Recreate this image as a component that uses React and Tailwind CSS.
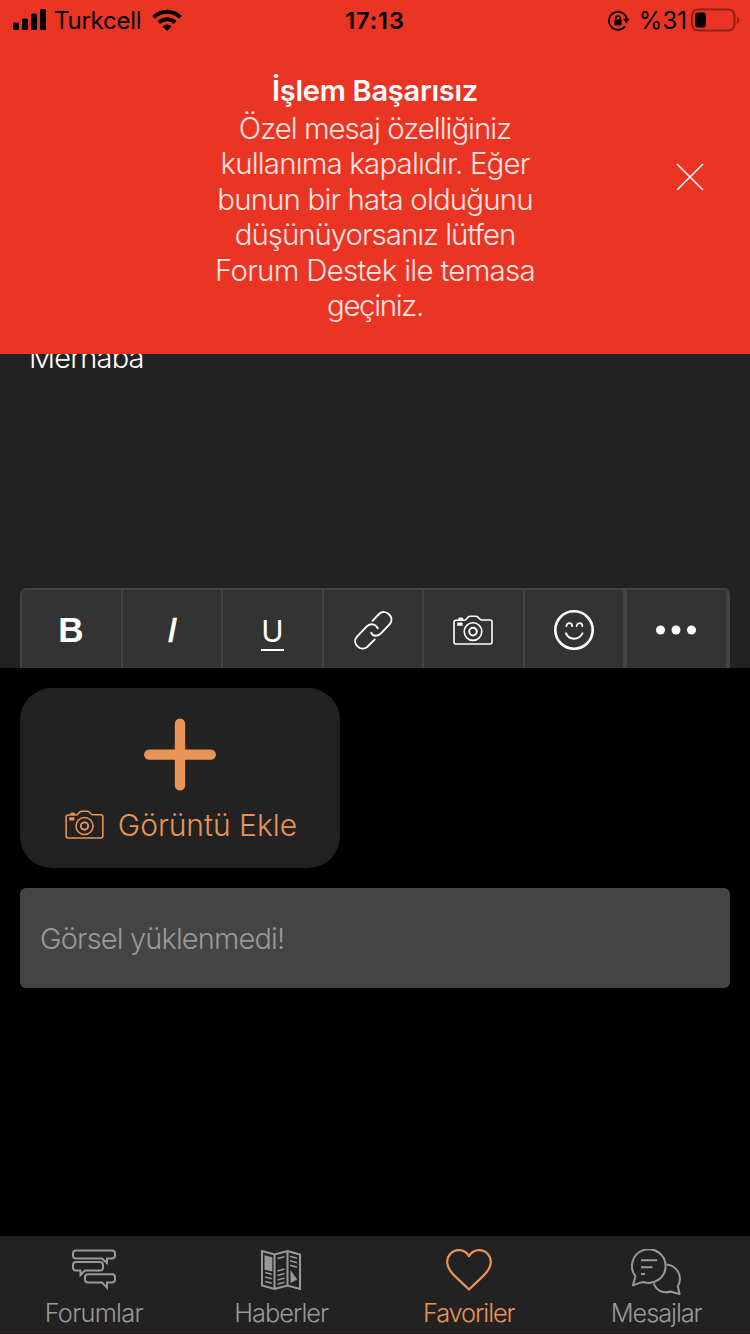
const line = "block whitespace-nowrap";

function Signal() {
  return (
    <svg className="h-[22px] w-[34px]" viewBox="0 0 34 22" fill="black">
      <rect x="0" y="13.5" width="6" height="7.5" rx="1.5" />
      <rect x="9" y="9.5" width="6" height="11.5" rx="1.5" />
      <rect x="18" y="4.5" width="6" height="16.5" rx="1.5" />
      <rect x="27" y="0" width="6" height="21" rx="1.5" />
    </svg>
  );
}

function Wifi() {
  return (
    <svg className="h-[22px] w-[30px]" viewBox="0 0 30 22" fill="none" stroke="black" strokeWidth="4">
      <path d="M1.6 8.3a19 19 0 0 1 26.8 0" />
      <path d="M6.8 13.6a11.6 11.6 0 0 1 16.4 0" />
      <path d="M15 22l-4.6-4.6a6.4 6.4 0 0 1 9.2 0z" fill="black" stroke="none" />
    </svg>
  );
}

function RotationLock() {
  return (
    <svg className="h-[22px] w-[22px]" viewBox="0 0 22 22" fill="none" stroke="black" strokeWidth="1.8">
      <path d="M17 16.4a9 9 0 1 1 1.8-7.4" />
      <path d="M15 8.7h6.6l-3.2 4.8z" fill="black" stroke="none" />
      <rect x="6.4" y="9.4" width="7.2" height="6" rx="0.8" fill="black" stroke="none" />
      <path d="M7.8 9.8V8.2a2.2 2.2 0 0 1 4.4 0v1.6" strokeWidth="1.5" />
    </svg>
  );
}

function Battery() {
  return (
    <svg className="h-[24px] w-[50px]" viewBox="0 0 50 24">
      <rect x="1" y="1.5" width="42.5" height="21" rx="6" fill="none" stroke="#8f2018" strokeWidth="2" />
      <rect x="4" y="4.5" width="11" height="15" rx="3" fill="black" />
      <path d="M46 8.5q2.6 1.4 2.6 3.8t-2.6 3.8z" fill="#8f2018" />
    </svg>
  );
}

function Camera({ className = "h-[30px] w-[40px]" }) {
  return (
    <svg className={className} viewBox="0 0 40 30" fill="none" stroke="currentColor" strokeWidth="1.6">
      <path d="M3 5.2H11.5C14 5.2 14 1.2 17 1.2H23C26 1.2 26 5 28.5 5H37Q39 5 39 7V27Q39 29 37 29H3Q1 29 1 27V7Q1 5.2 3 5.2Z" />
      <path d="M5 4.8Q5 2.6 7 2.6H8.5Q10.5 2.6 10.5 4.8Z" fill="currentColor" stroke="none" />
      <rect x="4.2" y="7.6" width="5.4" height="3.2" rx="0.5" fill="currentColor" stroke="none" />
      <circle cx="20" cy="16.6" r="8.8" />
      <circle cx="20" cy="16.6" r="3.8" strokeWidth="2" />
    </svg>
  );
}

function LinkIcon() {
  return (
    <svg className="h-[40px] w-[40px]" viewBox="0 0 40 40" fill="none" stroke="white" strokeWidth="1.9" strokeLinecap="round">
      <path d="M19.5 10.8L26.3 3.8C32.4 -1.8 42.4 7.2 36.9 13.8L28.5 22.8C25 26.8 20 26.8 18.2 22.8" />
      <path d="M21.8 29.4L14.2 37C8 42.2 -1.8 33.4 3.8 26.8L14 16.2C17.5 13 22.5 13.8 24.8 18.2" />
    </svg>
  );
}

function Smile() {
  return (
    <svg className="h-[40px] w-[40px]" viewBox="0 0 40 40" fill="none" stroke="white" strokeWidth="2" strokeLinecap="round">
      <circle cx="20" cy="20" r="18.7" strokeWidth="2.6" />
      <path d="M12.4 16.2a2.9 3 0 0 1 5.8 0M22.6 16.2a2.9 3 0 0 1 5.8 0" strokeWidth="1.7" />
      <path d="M12 23.4c3 7 13 7 16.4 0" />
    </svg>
  );
}

function Forums() {
  return (
    <svg className="h-[42px] w-[46px]" viewBox="0 0 46 42" fill="none" stroke="currentColor" strokeWidth="2">
      <path d="M5 1.5H41Q44 1.5 44 4.5V6.5Q44 9.5 41 9.5H36V14L31 9.5H5Q2 9.5 2 6.5V4.5Q2 1.5 5 1.5Z" />
      <path d="M5 13H29Q32 13 32 16V18.5Q32 21.5 29 21.5H14L9.5 26V21.5H5Q2 21.5 2 18.5V16Q2 13 5 13Z" />
      <path d="M17 25.3H41Q44 25.3 44 28.3V30.5Q44 33.5 41 33.5H36V38.6L31 33.5H17Q14 33.5 14 30.5V28.3Q14 25.3 17 25.3Z" />
    </svg>
  );
}

function News() {
  return (
    <svg className="h-[42px] w-[42px]" viewBox="0 0 42 42" fill="none" stroke="currentColor" strokeWidth="2">
      <path d="M2 2L14.5 5.5L27.5 2L40 5.5V40L27.5 36.5L14.5 40L2 36.5ZM14.5 5.5V40M27.5 2V36.5" />
      <path d="M4.5 6.3L12.3 8.2V22.5L4.5 20.8Z" fill="currentColor" stroke="none" />
      <path d="M5.2 23.5l6.6 1.8M5.2 28l6.6 1.8M5.2 32.5l6.6 1.8M17.5 9.5l7-1.8M17.5 22l7-2M17.5 26.5l7-2M17.5 31l7-2M17.5 35.3l7-2M30 7.2l7 2M30 11.7l7 2M30 16.2l7 2" strokeWidth="1.7" />
      <path d="M30.5 21L37.2 30.5L30.5 34Z" fill="currentColor" stroke="none" />
    </svg>
  );
}

function Heart() {
  return (
    <svg className="h-[42px] w-[46px]" viewBox="0 0 46 42" fill="none" stroke="currentColor" strokeWidth="2.2" strokeLinejoin="round">
      <path d="M23 7.3C20.7 3 17 1.2 12.8 1.2C6 1.2 1.2 6.6 1.2 12.8C1.2 23 13 30 23 40.6C33 30 44.8 23 44.8 12.8C44.8 6.6 40 1.2 33.2 1.2C29 1.2 25.3 3 23 7.3Z" />
    </svg>
  );
}

function Messages() {
  return (
    <svg className="h-[46px] w-[50px]" viewBox="0 0 50 46" fill="none" stroke="currentColor" strokeWidth="2" strokeLinejoin="round">
      <path d="M2 36.3L4.4 27.2A16.8 16.8 0 1 1 12.5 33Q8.5 33.6 2 36.3Z" />
      <path d="M35.6 15.6C43 16.2 49 22.5 49 29.8Q49 34 46.8 37.3L48.6 45Q43 43.6 39.5 42.5C32 45 25.5 41.5 22.8 34.6" />
      <path d="M10 11.2H26.2M10 18.2H21.5M10 25H14" />
    </svg>
  );
}

function Tool({ children, className = "border-r-2" }) {
  return <div className={`flex items-center justify-center border-[#444] pt-[2px] ${className}`}>{children}</div>;
}

function Tab({ label, labelClass, color, children }) {
  return (
    <div className={`flex flex-col items-center ${color}`}>
      <div className="flex h-[48px] items-start">{children}</div>
      <span className={`text-[25.4px] leading-[32px] font-light whitespace-nowrap ${labelClass}`}>{label}</span>
    </div>
  );
}

export default function App() {
  return (
    <div className="flex h-[1334px] w-[750px] flex-col overflow-hidden bg-black font-['Inter','Liberation_Sans',sans-serif]">
      <header className="h-[354px] shrink-0 bg-[#eb3524]">
        <div className="grid h-[40px] grid-cols-3 items-center text-black">
          <div className="flex items-center pl-[13px]">
            <Signal />
            <span className="ml-[7px] w-[98px] pt-[2px] text-[24px] tracking-[-0.25px] whitespace-nowrap">Turkcell</span>
            <Wifi />
          </div>
          <span className="pt-[2px] text-center text-[23.5px] font-semibold tracking-[0.9px]">17:13</span>
          <div className="flex items-center justify-end pr-[9px]">
            <span className="pt-[2px]"><RotationLock /></span>
            <span className="mr-[4px] ml-[9px] pt-[2px] text-[24px] whitespace-nowrap">%31</span>
            <Battery />
          </div>
        </div>
        <div className="grid grid-cols-[200px_350px_200px]">
          <div />
          <div className="flex flex-col items-center pt-[30px] text-white">
            <h1 className="text-[29px] leading-[41px] font-semibold tracking-[-0.25px]">İşlem Başarısız</h1>
            <p className="text-center text-[29.4px] leading-[35.4px] font-light text-[#ffe5e2]">
              <span className={`${line} tracking-[-0.98px]`}>Özel mesaj özelliğiniz</span>
              <span className={`${line} tracking-[-0.8px]`}>kullanıma kapalıdır. Eğer</span>
              <span className={`${line} tracking-[-0.82px]`}>bunun bir hata olduğunu</span>
              <span className={`${line} tracking-[-1px]`}>düşünüyorsanız lütfen</span>
              <span className={`${line} tracking-[-0.68px]`}>Forum Destek ile temasa</span>
              <span className={`${line} tracking-[-1.3px]`}>geçiniz.</span>
            </p>
          </div>
          <div className="flex justify-center pt-[123px] pl-[80px]">
            <svg className="h-[28px] w-[28px]" viewBox="0 0 28 28" stroke="white" strokeWidth="1.5">
              <path d="M1 1L27 27M27 1L1 27" />
            </svg>
          </div>
        </div>
      </header>

      <section className="flex h-[314px] shrink-0 flex-col justify-between overflow-hidden bg-[#222]">
        <p className="-mt-[14px] pl-[29px] text-[29px] leading-[36px] font-light tracking-[-0.8px] text-white">Merhaba</p>
        <div className="mx-[20px] grid h-[80px] grid-cols-[103px_100px_101px_100px_101px_102px_103px] rounded-t-[6px] border-t-2 border-[#444] bg-[#333] text-white">
          <Tool className="rounded-tl-[6px] border-r-2 border-l-2">
            <span className="pr-px font-['Liberation_Sans'] text-[35px] font-bold">B</span>
          </Tool>
          <Tool>
            <span className="font-['Liberation_Sans'] text-[35px] italic [-webkit-text-stroke:0.6px_white]">I</span>
          </Tool>
          <Tool>
            <span className="mt-[4px] border-b-2 text-[30px] leading-[35px]">U</span>
          </Tool>
          <Tool><LinkIcon /></Tool>
          <Tool><Camera className="mr-px h-[30px] w-[40px]" /></Tool>
          <Tool className="border-r-4"><Smile /></Tool>
          <Tool className="rounded-tr-[6px] border-r-4">
            <svg className="mr-[2px] mb-px h-[10px] w-[40px]" viewBox="0 0 40 10" fill="white">
              <circle cx="4.5" cy="5" r="4.5" />
              <circle cx="20" cy="5" r="4.5" />
              <circle cx="35.5" cy="5" r="4.5" />
            </svg>
          </Tool>
        </div>
      </section>

      <main className="flex flex-1 flex-col gap-[20px] p-[20px]">
        <div className="flex h-[180px] w-[320px] flex-col items-center rounded-[32px] bg-[#222] pt-[30px] text-[#e99457]">
          <svg className="h-[73px] w-[72px]" viewBox="0 0 72 73" stroke="currentColor" strokeWidth="10.4" strokeLinecap="round">
            <path d="M36 5.8V67.4M5.2 36.6H66.8" />
          </svg>
          <div className="mt-[15px] flex items-center gap-[14px] pl-[2px]">
            <Camera className="mb-[2px] h-[29px] w-[39px]" />
            <span className="text-[30px] leading-[38px] font-light whitespace-nowrap">Görüntü Ekle</span>
          </div>
        </div>
        <div className="flex h-[100px] items-center rounded-[6px] bg-[#444] pt-[2px] pl-[20px] text-[29px] font-light tracking-[-0.85px] text-[#999]">
          <span>Görsel yüklenmedi!</span>
        </div>
      </main>

      <nav className="grid h-[98px] shrink-0 grid-cols-4 border-b border-[#24151b] bg-[#222] pt-[13px]">
        <Tab label="Forumlar" color="text-[#999]" labelClass="tracking-[-0.75px]"><Forums /></Tab>
        <Tab label="Haberler" color="text-[#999]" labelClass="tracking-[-1px]"><News /></Tab>
        <Tab label="Favoriler" color="text-[#e99457]" labelClass="tracking-[-1.1px]"><Heart /></Tab>
        <Tab label="Mesajlar" color="text-[#999]" labelClass="tracking-[-1.1px]"><Messages /></Tab>
      </nav>
    </div>
  );
}
